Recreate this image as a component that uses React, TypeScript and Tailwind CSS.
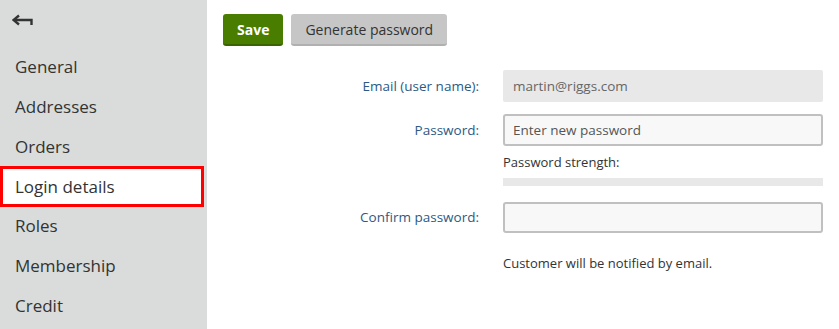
export default function App() {
  const items = ["General", "Addresses", "Orders", "Login details", "Roles", "Membership", "Credit"];

  return (
    <div
      className="flex w-[839px] h-[329px] bg-white overflow-hidden"
      style={{ fontFamily: '"Open Sans", "Noto Sans", sans-serif' }}
    >
      {/* Sidebar */}
      <div className="w-[207px] shrink-0 bg-[#d9dcdb] flex flex-col">
        <div className="h-[47px] pl-[12px] pt-[14px]">
          <svg width="22" height="14" viewBox="0 0 22 14" fill="none">
            <path d="M2 6 H19.5 V11" stroke="#333" strokeWidth="2.4" />
            <path d="M7 1.5 L1.5 6 L7 10.5" stroke="#333" strokeWidth="2.4" fill="none" />
          </svg>
        </div>
        {items.map((item) =>
          item === "Login details" ? (
            <div
              key={item}
              className="h-[41px] -my-[1px] mr-[3px] flex items-center pl-[12px] bg-white border-[3px] border-[#ff0000] text-[17px] text-[#333]"
            >
              {item}
            </div>
          ) : (
            <div key={item} className="h-10 flex items-center pl-[15px] text-[17px] text-[#333]">
              {item}
            </div>
          )
        )}
      </div>

      {/* Main */}
      <div className="flex-1 pl-[16px] pt-[14px] text-[13px] text-[#333]">
        <div className="flex gap-[8px]">
          <button className="h-[32px] px-[14px] rounded-[3px] bg-[#497d00] border-b-2 border-[#3a6400] text-white font-bold text-[14px]">
            Save
          </button>
          <button className="h-[32px] px-[14px] rounded-[3px] bg-[#c6c6c6] border-b-2 border-[#b0b0b0] text-[#333] text-[14px]">
            Generate password
          </button>
        </div>

        <div className="grid grid-cols-[256px_320px] gap-x-[24px] mt-[24px] items-center">
          <div className="text-right text-[#2b5a85] font-medium text-[13.5px]">Email (user name):</div>
          <div className="h-[32px] rounded-[2px] bg-[#e8e8e8] flex items-center px-[10px] text-[#666] text-[13.5px]">
            martin@riggs.com
          </div>

          <div className="text-right text-[#2b5a85] font-medium text-[13.5px] mt-[12px]">Password:</div>
          <div className="h-[32px] mt-[12px] rounded-[3px] bg-[#f8f8f8] border-2 border-[#c0c0c0] flex items-center px-[8px] text-[#555] text-[13.5px]">
            Enter new password
          </div>

          <div />
          <div className="mt-[8px] leading-[16px]">Password strength:</div>

          <div />
          <div className="mt-[8px] h-[8px] bg-[#e8e8e8]" />

          <div className="text-right text-[#2b5a85] font-medium text-[13.5px] mt-[16px]">Confirm password:</div>
          <div className="h-[31px] mt-[16px] rounded-[3px] bg-[#f8f8f8] border-2 border-[#c0c0c0]" />

          <div />
          <div className="mt-[22px] leading-[16px]">Customer will be notified by email.</div>
        </div>
      </div>
    </div>
  );
}
